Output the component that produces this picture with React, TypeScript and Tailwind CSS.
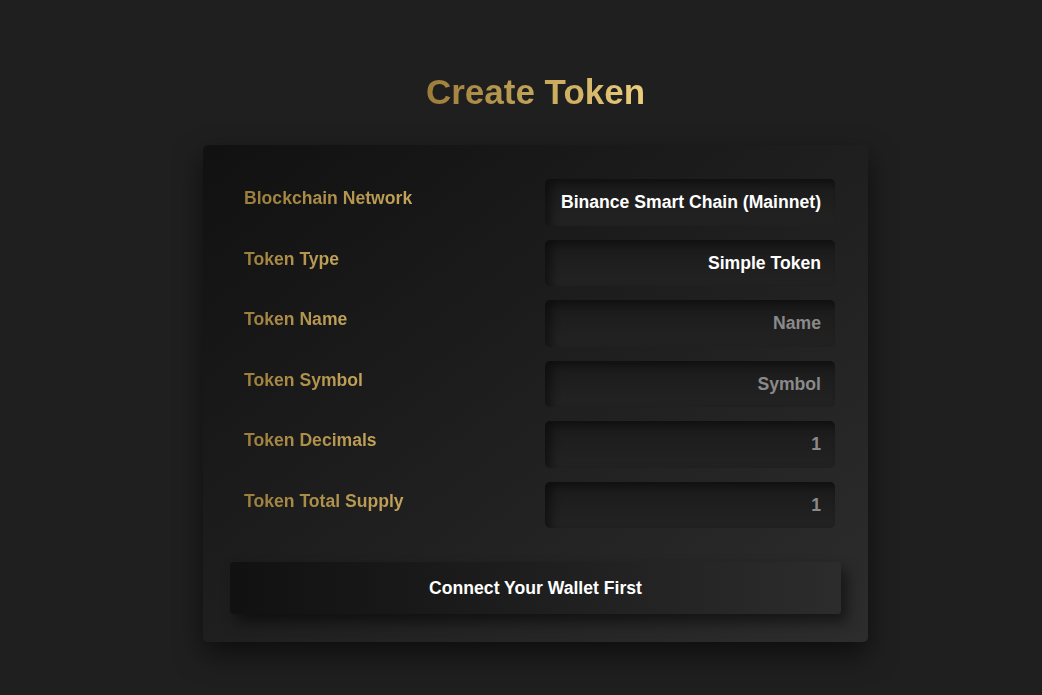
const fields = [
  { label: "Blockchain Network", value: "Binance Smart Chain (Mainnet)", filled: true },
  { label: "Token Type", value: "Simple Token", filled: true },
  { label: "Token Name", value: "Name", filled: false },
  { label: "Token Symbol", value: "Symbol", filled: false },
  { label: "Token Decimals", value: "1", filled: false },
  { label: "Token Total Supply", value: "1", filled: false },
];

export default function App() {
  return (
    <div
      className="min-h-[695px] w-full bg-[#1f1f1f] pl-[29px]"
      style={{ fontFamily: '"Liberation Sans", Arial, sans-serif' }}
    >
      <div className="mx-auto flex w-[665px] flex-col items-center pt-[72px]">
        <h1 className="bg-gradient-to-r from-[#9c7c38] to-[#ecce7c] bg-clip-text text-[35px] font-bold leading-[40px] text-transparent">
          Create Token
        </h1>

        <div className="mt-[33px] w-full rounded-[5px] bg-gradient-to-br from-[#111111] to-[#2d2d2d] px-[27px] pt-[34px] pb-[28px] shadow-[0_12px_28px_rgba(0,0,0,0.55)]">
          <div className="ml-[14px] mr-[6px] flex flex-col gap-[14px]">
            {fields.map((f) => (
              <div key={f.label} className="flex items-start justify-between">
                <span className="mt-[9px] bg-gradient-to-r from-[#9c7e3c] to-[#c4a45a] bg-clip-text text-[17.6px] font-bold leading-[20px] text-transparent">
                  {f.label}
                </span>
                <div
                  className={`flex h-[46.5px] w-[290px] items-center justify-end rounded-[5px] bg-gradient-to-b from-[#1a1a1a] to-[#232323] pr-[14px] text-[17.6px] font-bold shadow-[inset_6px_4px_10px_rgba(0,0,0,0.45)] ${
                    f.filled ? "text-white" : "text-[#8a8a8a]"
                  }`}
                >
                  {f.value}
                </div>
              </div>
            ))}
          </div>

          <button className="mt-[34px] flex h-[52px] w-full items-center justify-center rounded-[4px] bg-gradient-to-r from-[#111111] to-[#2c2c2c] text-[17.6px] font-bold text-white shadow-[6px_8px_14px_rgba(0,0,0,0.5)]">
            Connect Your Wallet First
          </button>
        </div>
      </div>
    </div>
  );
}
